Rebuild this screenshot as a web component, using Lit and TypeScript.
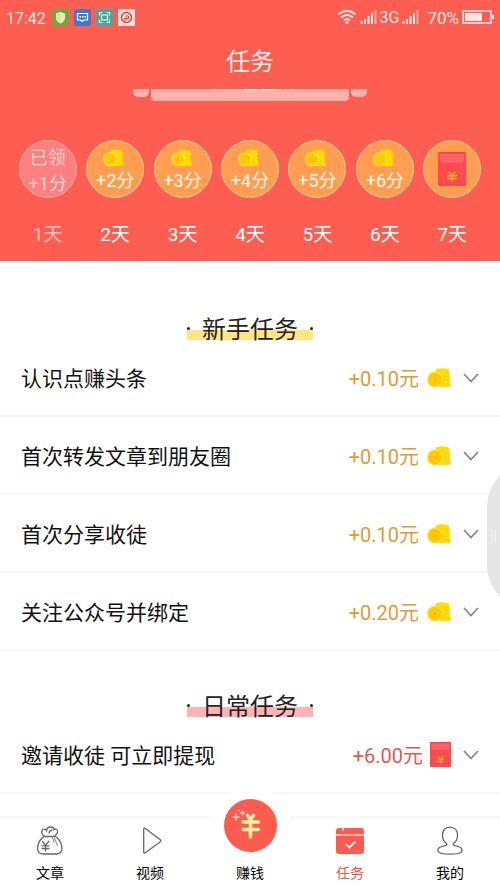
import { LitElement, html, css, svg, nothing } from "lit";
import { customElement, property } from "lit/decorators.js";
import { classMap } from "lit/directives/class-map.js";

interface Task {
  title: string;
  reward: string;
  kind: "coin" | "packet";
}

const coins = svg`
  <g fill="#fedc05">
    <rect x="9" y="1" width="13" height="17" rx="2"/>
    <ellipse cx="15" cy="2.6" rx="6.6" ry="2.3"/>
    <rect x="10" y="4" width="13" height="4" rx="2"/>
    <rect x="9" y="8" width="14" height="4" rx="2"/>
    <rect x="10" y="11.500" width="13" height="4" rx="2"/>
    <rect x="9" y="15" width="15" height="4" rx="2"/>
  </g>
  <path d="M11 4.500q5 1.500 11 0M14 8.200q4 1 9 0M15 11.800q4 1 8 0M14 15.400q4 1 9 0" fill="none" stroke="#f8ce00" stroke-width=".7"/>
  <circle cx="8" cy="11.500" r="8" fill="#ffe636"/>
  <circle cx="8" cy="11.500" r="6.900" fill="#ffcc08"/>
  <circle cx="8" cy="11.500" r="4.500" fill="none" stroke="#fbbe00" stroke-width=".7"/>
  <path d="M6.300 9.300l1.700 2 1.700-2M8 11.300v3M6.500 12.400h3" fill="none" stroke="#f7b500" stroke-width=".8"/>`;

@customElement("coin-icon")
export class CoinIcon extends LitElement {
  static styles = css`
    :host { display: block; }
    svg { display: block; width: 100%; height: 100%; }
  `;
  render() {
    return html`<svg viewBox="0 0 24 20" aria-hidden="true">${coins}</svg>`;
  }
}

@customElement("packet-icon")
export class PacketIcon extends LitElement {
  static styles = css`
    :host { display: block; }
    svg { display: block; width: 100%; height: 100%; }
  `;
  render() {
    return html`<svg viewBox="0 0 28 34" preserveAspectRatio="none" aria-hidden="true">
      <rect width="28" height="34" rx="1.500" fill="#fd4a50"/>
      <path d="M2 2h24v6q-1 3-4 3h-16q-3 0-4-3z" fill="#fd6366"/>
      <path d="M.5 .7h27" stroke="#ee434a"/>
      <path d="M10.500 19.500l3.500 4 3.500-4M14 23.500v6M9.500 23.800h9M9.500 26.600h9" fill="none" stroke="#fdb81c" stroke-width="1.500"/>
    </svg>`;
  }
}

@customElement("status-bar")
export class StatusBar extends LitElement {
  static styles = css`
    :host {
      display: flex;
      align-items: center;
      height: 34px;
      padding: 0 6px;
      color: #ffe0dc;
      font-size: 16px;
    }
    .time { margin-top: 2px; }
    .apps { display: flex; gap: 5px; margin-left: 6px; }
    .app { display: block; width: 17px; height: 17px; }
    .right { display: flex; align-items: center; gap: 3px; margin-left: auto; }
    .pct { margin: 2px 0 0 5px; font-size: 17px; }
    svg { display: block; }
  `;

  private bars() {
    return html`<svg width="17" height="15" viewBox="0 0 17 15" aria-hidden="true">
      <path d="M1.500 11v3M5 9v5M8.500 6v8M12 3v11" stroke="#ffe6e3" stroke-width="2"/>
      <path d="M15.500 0v14" stroke="#ffab9f" stroke-width="2"/>
    </svg>`;
  }

  render() {
    return html`
      <span class="time">17:42</span>
      <span class="apps">
        <svg class="app" viewBox="0 0 17 17"><rect width="17" height="17" rx="2" fill="#73a53d"/><path d="M8.500 3l4.500 1.500v4q0 4-4.500 6-4.500-2-4.500-6v-4z" fill="#f2e8b8"/><path d="M8.500 3v11.500q-4.500-2-4.500-6v-4z" fill="#dce3a4"/></svg>
        <svg class="app" viewBox="0 0 17 17"><rect width="17" height="17" rx="2" fill="#4478c5"/><path d="M3.500 4.500h10v6.500h-4l-1.500 1.500-1.500-1.500h-3z" fill="none" stroke="#fff" stroke-width="1.200"/><path d="M5.500 7.800h1.500M8 7.800h1.500M10.500 7.800h1.500" stroke="#fff" stroke-width="1.400"/></svg>
        <svg class="app" viewBox="0 0 17 17"><rect width="17" height="17" rx="2" fill="#4fa59c"/><path d="M3.500 6.500v-3h3M10.500 3.500h3v3M13.500 10.500v3h-3M6.500 13.500h-3v-3" fill="none" stroke="#d4f3ec" stroke-width="1.200"/><rect x="5.500" y="6" width="6" height="5" fill="none" stroke="#d4f3ec" stroke-width="1.200"/></svg>
        <svg class="app" viewBox="0 0 17 17"><rect width="17" height="17" fill="#ffdcd8"/><circle cx="8.500" cy="8.500" r="5" fill="none" stroke="#cf4a44" stroke-width="1.500"/><path d="M6 9.500h4q1.500-1 0-2.500h-3M6.500 11.500q2-1 2-3" fill="none" stroke="#cf4a44" stroke-width="1.200"/></svg>
      </span>
      <span class="right">
        <svg width="20" height="16" viewBox="0 0 20 16" aria-hidden="true">
          <g fill="none" stroke="#ffe6e3" stroke-width="1.700">
            <path d="M1.500 5.500q8.500-7.500 17 0"/><path d="M4.200 8.500q5.800-5 11.600 0"/><path d="M7 11.400q3-2.500 6 0"/>
          </g>
          <circle cx="10" cy="13.500" r="1.500" fill="#ffe6e3"/>
        </svg>
        ${this.bars()}
        <span>3G</span>
        ${this.bars()}
        <span class="pct">70%</span>
        <svg width="32" height="14" viewBox="0 0 32 14" aria-hidden="true">
          <rect x="1" y="1" width="28" height="12" fill="none" stroke="#ffe6e3" stroke-width="1.600"/>
          <rect x="3" y="3" width="17" height="8" fill="#ffe6e3"/>
          <rect x="30" y="5" width="2" height="4" fill="#ffe6e3"/>
        </svg>
      </span>`;
  }
}

@customElement("task-section")
export class TaskSection extends LitElement {
  @property() heading = "";
  @property() tone: "yellow" | "pink" = "yellow";
  @property({ attribute: false }) tasks: Task[] = [];

  static styles = css`
    :host { display: block; }
    h2 {
      display: flex;
      justify-content: center;
      margin: 0 0 -1px;
      font-size: 24px;
      line-height: 30px;
      font-weight: 400;
      color: #222;
    }
    .mark {
      box-sizing: border-box;
      display: flex;
      align-items: center;
      justify-content: space-between;
      width: 126px;
      height: 30px;
      padding-top: 10px;
    }
    .yellow { background: linear-gradient(#ffe583, #ffe583) bottom / 100% 10px no-repeat; }
    .pink { background: linear-gradient(#ffb3b3, #ffb3b3) bottom / 100% 10px no-repeat; }
    .mark::before, .mark::after {
      content: "";
      width: 3px;
      height: 3px;
      margin-bottom: 3px;
      border-radius: 50%;
      background: #222;
    }
    ul { margin: 0; padding: 0; list-style: none; }
    li { border-bottom: 2px solid #f6f6f6; }
    button {
      display: flex;
      align-items: center;
      width: 100%;
      height: 76px;
      padding: 0 21px;
      border: 0;
      background: none;
      font: inherit;
      font-size: 21px;
      color: #111;
      text-align: left;
    }
    .title { flex: 1; }
    .reward { font-size: 20px; color: #dd9c38; }
    .reward.packet { color: #e05a4e; }
    coin-icon { width: 24px; height: 20px; margin: 2px 12px 0 8px; }
    packet-icon { width: 21px; height: 25px; margin: 0 12px 0 7px; }
    .chev { display: block; width: 16px; height: 10px; margin-top: 2px; }
  `;

  render() {
    return html`
      <h2><span class=${classMap({ mark: true, [this.tone]: true })}>${this.heading}</span></h2>
      <ul>
        ${this.tasks.map(
          (t) => html`<li>
            <button type="button" aria-expanded="false">
              <span class="title">${t.title}</span>
              <span class=${classMap({ reward: true, packet: t.kind === "packet" })}>${t.reward}</span>
              ${t.kind === "coin" ? html`<coin-icon></coin-icon>` : html`<packet-icon></packet-icon>`}
              <svg class="chev" viewBox="0 0 16 10" aria-hidden="true"><path d="M1 1l7 7.500 7-7.500" fill="none" stroke="#858585" stroke-width="1.700"/></svg>
            </button>
          </li>`
        )}
      </ul>`;
  }
}

@customElement("tab-bar")
export class TabBar extends LitElement {
  static styles = css`
    :host { display: block; }
    nav {
      display: grid;
      grid-template-columns: repeat(5, 1fr);
      height: 69px;
      border-top: 3px solid #f8f8f8;
      background: #fff;
    }
    a {
      display: flex;
      flex-direction: column;
      align-items: center;
      justify-content: flex-end;
      gap: 7px;
      padding-bottom: 4px;
      font-size: 14px;
      line-height: 22px;
      color: #000;
      text-decoration: none;
    }
    a.on { color: #e05a4e; }
    .icon { display: block; width: 28px; height: 29px; }
    .earn { position: relative; }
    .knob {
      position: absolute;
      bottom: 23px;
      left: 50%;
      margin-left: -38px;
      display: block;
      width: 78px;
      height: 78px;
    }
  `;

  render() {
    return html`<nav>
      <a href="#articles">
        <svg class="icon" viewBox="0 0 28 29" fill="none" stroke="#666" stroke-width="1.300" aria-hidden="true">
          <path d="M8.500 10.500Q4 7 6.500 4 9 2 10.500 4.500 11 .8 15 1q3 .2 3 2.500Q20.500 2 21.500 4.500q.8 3-3.500 6M7.500 10.500h12M8 10.500C3 14 1.500 18 1.600 23q.4 4.500 5 5h14q5-.5 5.400-5C26 18 24.500 14 19.500 10.500"/>
          <path d="M13 7.500q0-3 3.500-3.500"/><path d="M16.500 11l1.500 5.500M18.500 12l3 8" stroke-width=".8"/>
          <path d="M6 15l3.500 4.500L13 15M9.500 19.500v6M5.500 19.800h8M5.500 22.500h8"/>
        </svg>文章
      </a>
      <a href="#video">
        <svg class="icon" viewBox="0 0 28 29" fill="none" stroke="#666" stroke-width="1.300" stroke-linejoin="round" aria-hidden="true">
          <path d="M7.700 3v23q.3 1.500 1.600.7L24 16q1.500-1.200 0-2.400L9.300 2.400q-1.400-.8-1.600.6z"/>
        </svg>视频
      </a>
      <a class="earn" href="#earn">
        <svg class="knob" viewBox="0 0 78 78" aria-hidden="true">
          <circle cx="39" cy="39" r="39" fill="#fff"/>
          <circle cx="38.500" cy="38.500" r="26.500" fill="#fc5c50"/>
          <g fill="none" stroke="#fff0a0" stroke-width="3.600" stroke-linecap="round">
            <path d="M35.500 28.500l3 4 3-4M38.500 33v17M31 35h15.500M31 42.500h15.500"/>
          </g>
          <g stroke="#ffc9c2" fill="none"><path d="M24 26.500v7M20.500 30h7" stroke-width="1.600"/><path d="M30.500 23.500v5M28 26h5" stroke-width="1.300"/><path d="M26.500 22v3M25 23.500h3" stroke-width="1"/></g>
        </svg>赚钱
      </a>
      <a class="on" href="#tasks" aria-current="page">
        <svg class="icon" viewBox="0 0 28 29" aria-hidden="true">
          <rect y="2" width="28" height="26" rx="3" fill="#fc5c50"/>
          <path d="M0 9h28" stroke="#ffe8e6" stroke-width="1.300"/>
          <path d="M7 1v4" stroke="#ffe0dd" stroke-width="1.500"/>
          <path d="M9.500 17.500l4 4 6-6" fill="none" stroke="#fff" stroke-width="1.700"/>
        </svg>任务
      </a>
      <a href="#me">
        <svg class="icon" viewBox="0 0 28 29" fill="none" stroke="#666" stroke-width="1.300" aria-hidden="true">
          <path d="M14 1.200c-5 0-7.500 3.500-7.500 8 0 3.500 1.500 6.500 3.700 8 1.300 1.200.8 2-1 2.500C5 20.500 1.800 22 1.800 24.200c0 2.600 5 4 12.200 4s12.200-1.400 12.200-4c0-2.200-3.200-3.700-7.400-4.500-1.800-.5-2.300-1.300-1-2.500 2.200-1.500 3.700-4.500 3.700-8 0-4.500-2.500-8-7.500-8z"/>
        </svg>我的
      </a>
    </nav>`;
  }
}

const starter: Task[] = [
  { title: "认识点赚头条", reward: "+0.10元", kind: "coin" },
  { title: "首次转发文章到朋友圈", reward: "+0.10元", kind: "coin" },
  { title: "首次分享收徒", reward: "+0.10元", kind: "coin" },
  { title: "关注公众号并绑定", reward: "+0.20元", kind: "coin" },
];

const daily: Task[] = [{ title: "邀请收徒 可立即提现", reward: "+6.00元", kind: "packet" }];

@customElement("app-root")
export class AppRoot extends LitElement {
  static styles = css`
    :host {
      display: flex;
      flex-direction: column;
      min-height: 100vh;
      background: #fff;
      font-family: Roboto, "Noto Sans CJK SC", sans-serif;
    }
    header { background: #fd5e51; color: #fff; padding-bottom: 12px; }
    h1 {
      margin: 0;
      padding: 14px 0 13px;
      font-size: 24px;
      line-height: 28px;
      font-weight: 400;
      text-align: center;
      color: #fff1ef;
    }
    .banner { display: flex; justify-content: center; gap: 2px; height: 12px; }
    .wing { width: 16px; height: 8px; background: #ffb1aa; border-radius: 0 0 5px 5px; }
    .plate {
      box-sizing: border-box;
      display: flex;
      align-items: flex-end;
      justify-content: center;
      width: 198px;
      height: 12px;
      padding-bottom: 9px;
      overflow: hidden;
      background: #ffb1aa;
      border-radius: 0 0 4px 4px;
      font-size: 18px;
      line-height: 18px;
    }
    .days {
      display: grid;
      grid-template-columns: repeat(7, 1fr);
      margin: 39px 0 0;
      padding: 0 14px;
      list-style: none;
    }
    .day { display: flex; flex-direction: column; align-items: center; gap: 22px; }
    .disc {
      box-sizing: border-box;
      display: flex;
      flex-direction: column;
      align-items: center;
      justify-content: center;
      width: 58px;
      height: 58px;
      padding-top: 4px;
      border: 1px solid #ffd0a2;
      border-radius: 50%;
      background: #ff9d53;
      font-size: 18px;
      line-height: 26px;
      white-space: nowrap;
      color: #fffbe8;
    }
    .disc coin-icon { width: 21px; height: 18px; margin: 0 3px 1px 0; }
    .disc.gift { padding: 0; }
    .disc packet-icon { width: 28px; height: 34px; }
    .name { font-size: 19px; line-height: 29px; }
    .done .disc { background: #fd8080; border-color: #ffb5b0; color: #ffd2cd; }
    .done .name { color: #ffc0b9; }
    main { flex: 1; padding-bottom: 22px; }
    .first { padding-top: 49px; }
    .next { padding-top: 36px; }
    tab-bar { position: sticky; bottom: 0; }
    .handle { position: fixed; right: 0; top: 475px; display: block; width: 13px; height: 122px; }
  `;

  private day(n: number) {
    const done = n === 1;
    const gift = n === 7;
    return html`<li class=${classMap({ day: true, done })}>
      <span class=${classMap({ disc: true, gift })}>
        ${done ? html`<span>已领</span>` : nothing}
        ${!done && !gift ? html`<coin-icon></coin-icon>` : nothing}
        ${gift ? html`<packet-icon></packet-icon>` : html`<span>+${n}分</span>`}
      </span>
      <span class="name">${n}天</span>
    </li>`;
  }

  render() {
    return html`
      <header>
        <status-bar></status-bar>
        <h1>任务</h1>
        <div class="banner">
          <span class="wing"></span><span class="plate"><span>今日已签到</span></span><span class="wing"></span>
        </div>
        <ul class="days">${[1, 2, 3, 4, 5, 6, 7].map((n) => this.day(n))}</ul>
      </header>
      <main>
        <task-section class="first" heading="新手任务" tone="yellow" .tasks=${starter}></task-section>
        <task-section class="next" heading="日常任务" tone="pink" .tasks=${daily}></task-section>
      </main>
      <tab-bar></tab-bar>
      <svg class="handle" viewBox="0 0 13 122" aria-hidden="true">
        <path d="M13 0Q0 14 0 32v58q0 18 13 32z" fill="#e6e6e6"/>
        <path d="M5.500 55v13M8.500 55v13" stroke="#f4f4f4"/>
      </svg>`;
  }
}
